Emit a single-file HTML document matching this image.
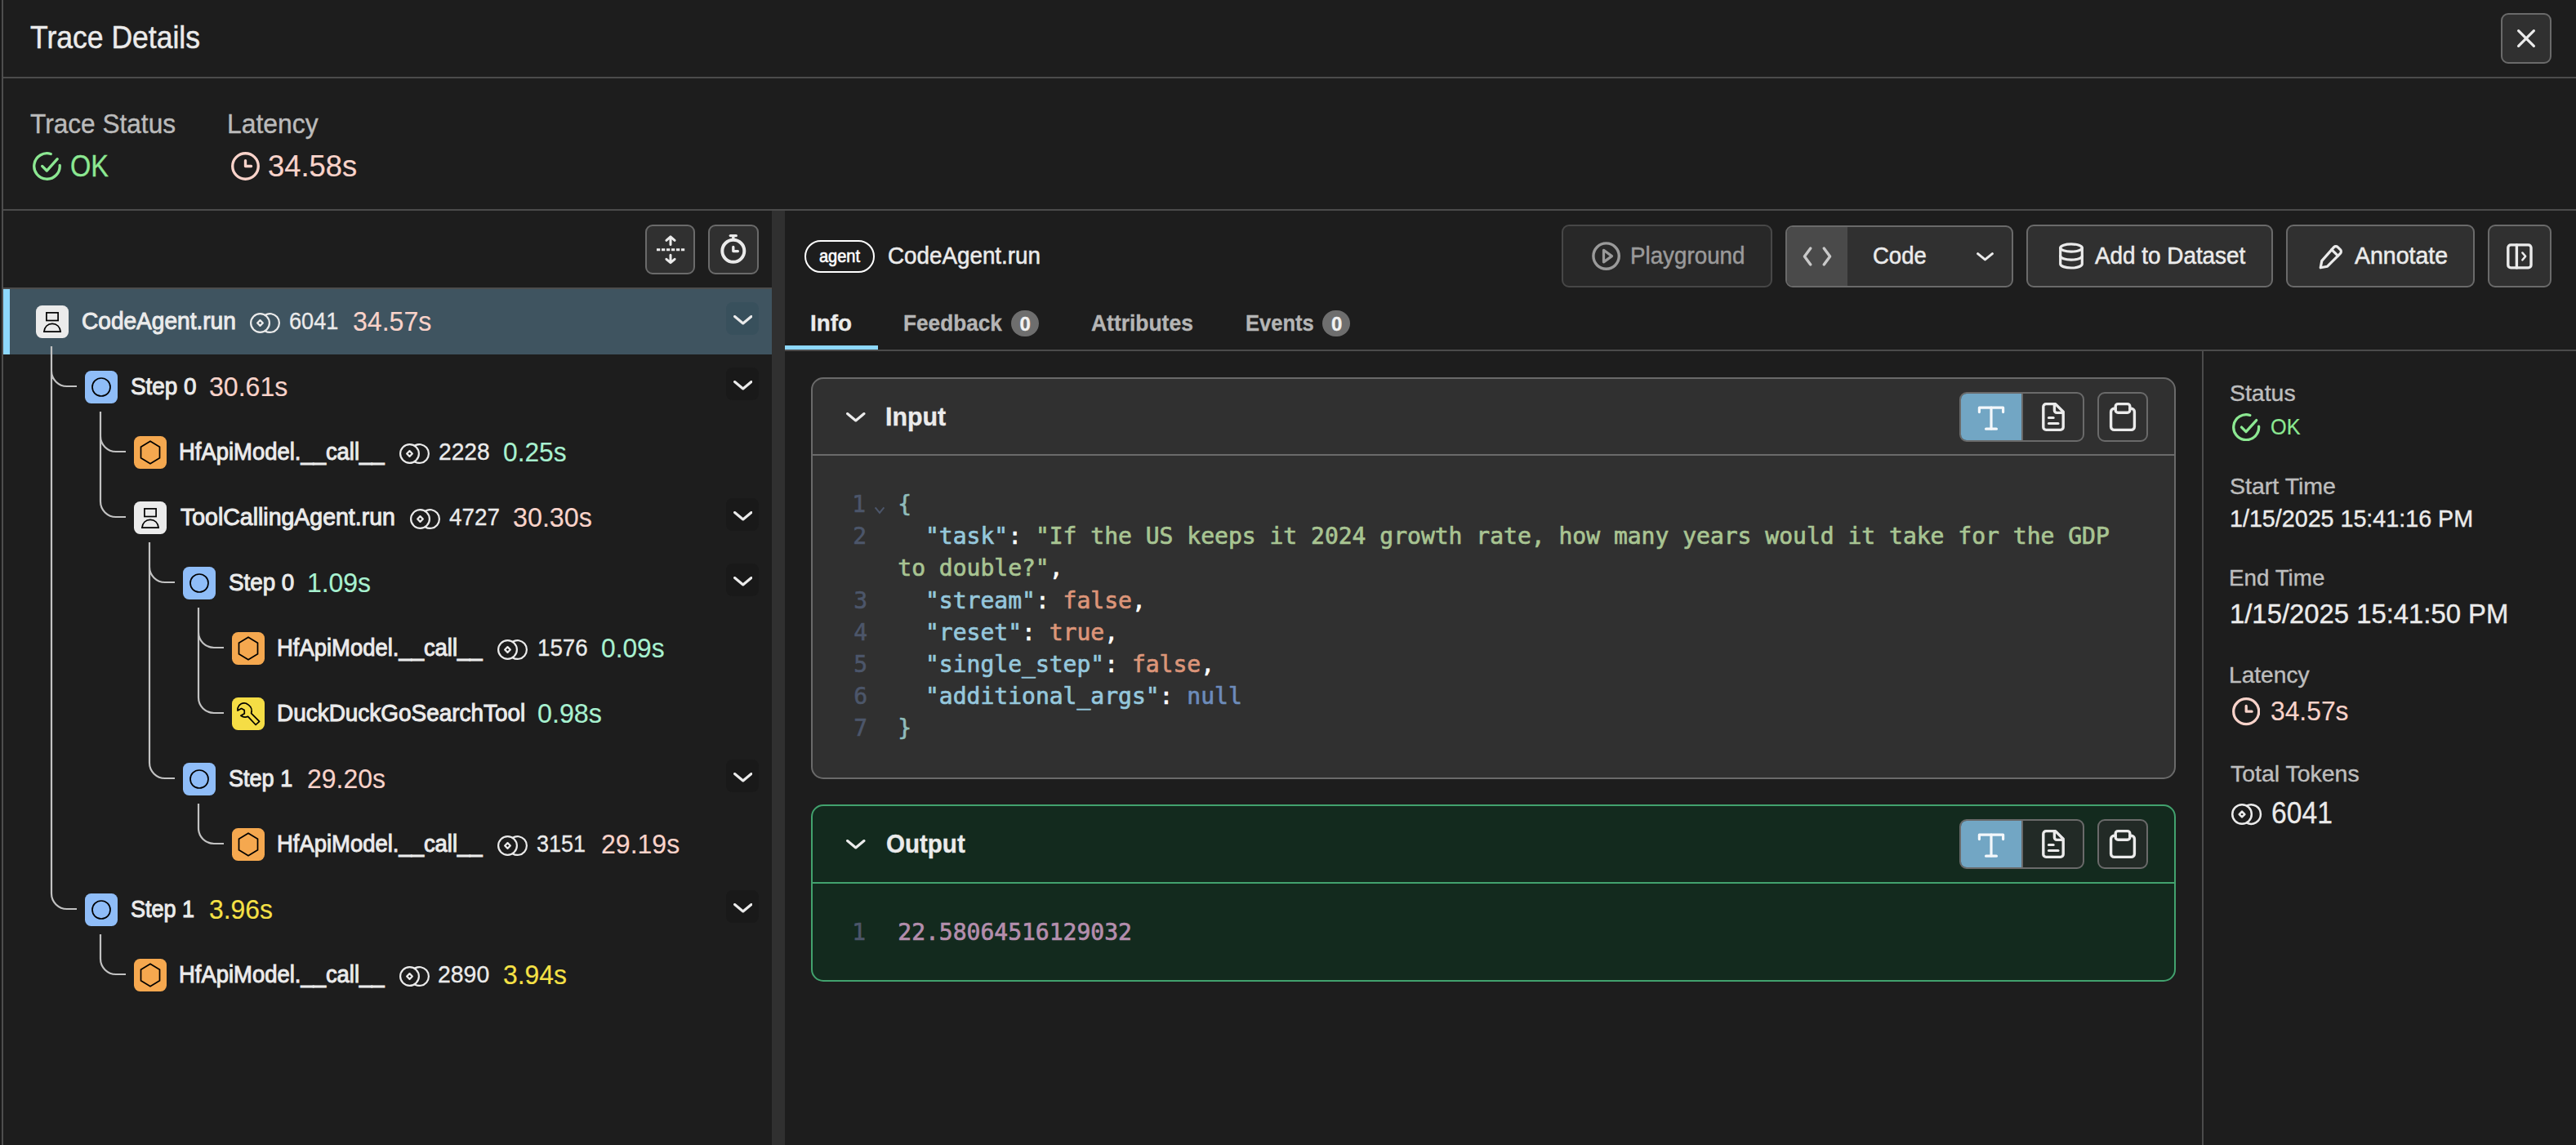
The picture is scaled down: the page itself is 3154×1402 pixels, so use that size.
<!DOCTYPE html>
<html lang="en"><head><meta charset="utf-8"><title>Trace Details</title>
<style>
html,body{margin:0;padding:0}
body{width:3154px;height:1402px;overflow:hidden;position:relative;background:#1d1d1d;font-family:"Liberation Sans", sans-serif;color:#ebebeb}
.t{position:absolute;white-space:pre;margin:0;transform-origin:0 0}
.btn{position:absolute;box-sizing:border-box;border:2px solid #6a6a6a;border-radius:9px;background:#303030}
.ib{position:absolute;width:40px;height:40px;border-radius:7.5px}
.m{font-family:"DejaVu Sans Mono", "Liberation Mono", monospace}
</style></head><body>

<div style="position:absolute;left:0px;top:0px;width:2px;height:1402px;background:#1a1a1a"></div>
<div style="position:absolute;left:2px;top:0px;width:2px;height:1402px;background:#4e4e4e"></div>
<div class="t" style="left:36.50px;top:24.40px;font-size:38.2px;line-height:43px;color:#ebebeb;transform:scaleX(0.9306);-webkit-text-stroke:0.5px #ebebeb;">Trace Details</div>
<div style="position:absolute;left:4px;top:94px;width:3150px;height:2px;background:#4b4b4b"></div>
<div class="btn" style="left:3062px;top:16px;width:62px;height:62px"></div>
<svg style="position:absolute;left:3080px;top:34px;" width="26" height="26" viewBox="0 0 26 26" fill="none"><path d="M3.6 3.6 L22.4 22.4 M22.4 3.6 L3.6 22.4" stroke="#ebebeb" stroke-width="3.2" stroke-linecap="round"/></svg>
<div class="t" style="left:36.50px;top:133.10px;font-size:33.1px;line-height:37px;color:#bbbbbb;transform:scaleX(0.9556);-webkit-text-stroke:0.4px #bbbbbb;">Trace Status</div>
<div class="t" style="left:278.07px;top:133.10px;font-size:33.1px;line-height:37px;color:#bbbbbb;transform:scaleX(0.9640);-webkit-text-stroke:0.4px #bbbbbb;">Latency</div>
<svg style="position:absolute;left:40px;top:186.2px;" width="35" height="35" viewBox="0 0 35 35" fill="none"><g transform="translate(17.50 17.50) scale(1.0086)" stroke="#8ce892" stroke-width="3.3" stroke-linecap="round" stroke-linejoin="round"><path d="M15.56 -1.09 A15.6 15.6 0 1 1 4.67 -14.89"/><path d="M-5.8 -0.1 L-0.2 5.5 L12.6 -8.7"/></g></svg>
<div class="t" style="left:85.73px;top:181.90px;font-size:37.4px;line-height:42px;color:#8ce892;transform:scaleX(0.8703);-webkit-text-stroke:0.3px #8ce892;">OK</div>
<svg style="position:absolute;left:282.5px;top:186.2px;" width="35" height="35" viewBox="0 0 35 35" fill="none"><g transform="translate(17.50 17.50) scale(1.0116)" stroke="#f9d3ca" stroke-width="3.3" stroke-linecap="round" stroke-linejoin="round"><circle cx="0" cy="0" r="15.6"/><path d="M0 -6.8 V0 H6.95"/></g></svg>
<div class="t" style="left:328.23px;top:181.90px;font-size:37.4px;line-height:42px;color:#f9d3ca;transform:scaleX(0.9713);-webkit-text-stroke:0.2px #f9d3ca;">34.58s</div>
<div style="position:absolute;left:4px;top:256px;width:3150px;height:2px;background:#4b4b4b"></div>
<div class="btn" style="left:790px;top:275px;width:61px;height:61px"></div>
<div class="btn" style="left:867px;top:275px;width:62px;height:61px"></div>
<svg style="position:absolute;left:800px;top:285px;" width="42" height="42" viewBox="0 0 42 42" fill="none"><g stroke="#ebebeb" stroke-width="3" stroke-linecap="round" stroke-linejoin="round"><path d="M21 14.4V5.4 M15.9 9.3 L21 4.9 L26.1 9.3"/><path d="M21 27.2V36.2 M15.9 32.3 L21 36.7 L26.1 32.3"/><path d="M4 20.7H38.2" stroke-dasharray="4.3 1.7" stroke-linecap="butt"/></g></svg>
<svg style="position:absolute;left:877px;top:283px;" width="42" height="46" viewBox="0 0 42 46" fill="none"><g stroke="#ebebeb" stroke-linecap="round" stroke-linejoin="round"><circle cx="20.8" cy="24.3" r="13.5" stroke-width="4"/><path d="M17.3 5.6H24.3" stroke-width="3.4"/><path d="M20.8 6V10" stroke-width="3.4"/><path d="M20.8 19.5V24.6H26.4" stroke-width="3.3"/></g></svg>
<div style="position:absolute;left:4px;top:352px;width:941px;height:2px;background:#4d4d4d"></div>
<div style="position:absolute;left:4px;top:354px;width:941px;height:80px;background:#3f5460"></div>
<div style="position:absolute;left:4px;top:354px;width:8px;height:80px;background:#8dd8fd"></div>
<div style="position:absolute;left:945px;top:258px;width:16px;height:1144px;background:#303030"></div>
<svg style="position:absolute;left:0px;top:0px;" width="945" height="1402" viewBox="0 0 945 1402" fill="none"><path d="M63 424 V1094 M63 448 V454 A19 19 0 0 0 82 473 H94 M63 1088 V1094 A19 19 0 0 0 82 1113 H94  M123 504 V614 M123 528 V534 A19 19 0 0 0 142 553 H154 M123 608 V614 A19 19 0 0 0 142 633 H154  M183 664 V934 M183 688 V694 A19 19 0 0 0 202 713 H214 M183 928 V934 A19 19 0 0 0 202 953 H214  M243 744 V854 M243 768 V774 A19 19 0 0 0 262 793 H274 M243 848 V854 A19 19 0 0 0 262 873 H274  M243 984 V1014 M243 1008 V1014 A19 19 0 0 0 262 1033 H274  M123 1144 V1174 M123 1168 V1174 A19 19 0 0 0 142 1193 H154 " stroke="#c2c2c2" stroke-width="2.2"/></svg>
<div class="ib" style="left:44px;top:374px;background:#ebebeb"></div><svg style="position:absolute;left:44px;top:374px;" width="40" height="40" viewBox="0 0 40 40" fill="none"><rect x="12.9" y="8.9" width="14.2" height="9.6" stroke="#000" stroke-width="1.7"/><path d="M9.9 32.1 C10.4 26.2 14.5 22.3 20 22.3 C25.5 22.3 29.6 26.2 30.1 32.1 Z" stroke="#000" stroke-width="1.7" stroke-linejoin="miter"/></svg>
<div class="t" style="left:99.78px;top:376.90px;font-size:29px;line-height:32px;color:#ebebeb;transform:scaleX(0.9678);-webkit-text-stroke:1.0px #ebebeb;">CodeAgent.run</div>
<svg style="position:absolute;left:304.5px;top:382.3px;" width="39.0" height="27.0" viewBox="0 0 39.0 27.0" fill="none"><circle cx="13.50" cy="13.50" r="11.4" stroke="#ebebeb" stroke-width="2.2"/><path d="M19.50 3.81 A11.4 11.4 0 1 1 19.50 23.19" stroke="#ebebeb" stroke-width="2.2"/><path d="M13.50 10.15 L16.85 13.50 L13.50 16.85 L10.15 13.50 Z" stroke="#ebebeb" stroke-width="2.2" stroke-linejoin="round"/></svg>
<div class="t" style="left:353.56px;top:376.90px;font-size:28.8px;line-height:32px;color:#ebebeb;transform:scaleX(0.9428);-webkit-text-stroke:0.3px #ebebeb;">6041</div>
<div class="t" style="left:432.27px;top:374.60px;font-size:32.8px;line-height:37px;color:#f9d3ca;transform:scaleX(0.9787);-webkit-text-stroke:0.15px #f9d3ca;">34.57s</div>
<div style="position:absolute;left:889px;top:370px;width:40px;height:40px;border-radius:8px;background:#38505c"></div>
<svg style="position:absolute;left:897.55px;top:386.45px;" width="23.5" height="11.5" viewBox="0 0 23.5 11.5" fill="none"><path d="M1.6 1.6 L11.75 9.90 L21.90 1.6" stroke="#ebebeb" stroke-width="3.2" stroke-linecap="round" stroke-linejoin="round"/></svg>
<div class="ib" style="left:104px;top:454px;background:#8fbdf8"></div><svg style="position:absolute;left:104px;top:454px;" width="40" height="40" viewBox="0 0 40 40" fill="none"><circle cx="20" cy="20" r="11" stroke="#000" stroke-width="1.7"/></svg>
<div class="t" style="left:159.79px;top:456.90px;font-size:29px;line-height:32px;color:#ebebeb;transform:scaleX(0.9607);-webkit-text-stroke:1.0px #ebebeb;">Step 0</div>
<div class="t" style="left:255.77px;top:454.60px;font-size:32.8px;line-height:37px;color:#f9d3ca;transform:scaleX(0.9787);-webkit-text-stroke:0.15px #f9d3ca;">30.61s</div>
<div style="position:absolute;left:889px;top:450px;width:40px;height:40px;border-radius:8px;background:#191919"></div>
<svg style="position:absolute;left:897.55px;top:466.45px;" width="23.5" height="11.5" viewBox="0 0 23.5 11.5" fill="none"><path d="M1.6 1.6 L11.75 9.90 L21.90 1.6" stroke="#ebebeb" stroke-width="3.2" stroke-linecap="round" stroke-linejoin="round"/></svg>
<div class="ib" style="left:164px;top:534px;background:#f5a84f"></div><svg style="position:absolute;left:164px;top:534px;" width="40" height="40" viewBox="0 0 40 40" fill="none"><path d="M20 6.3 L31.5 13.2 V26.8 L20 33.7 L8.5 26.8 V13.2 Z" stroke="#000" stroke-width="1.7" stroke-linejoin="miter"/></svg>
<div class="t" style="left:218.86px;top:536.90px;font-size:29px;line-height:32px;color:#ebebeb;transform:scaleX(0.9458);-webkit-text-stroke:1.0px #ebebeb;">HfApiModel.__call__</div>
<svg style="position:absolute;left:487.75px;top:542.3px;" width="39.0" height="27.0" viewBox="0 0 39.0 27.0" fill="none"><circle cx="13.50" cy="13.50" r="11.4" stroke="#ebebeb" stroke-width="2.2"/><path d="M19.50 3.81 A11.4 11.4 0 1 1 19.50 23.19" stroke="#ebebeb" stroke-width="2.2"/><path d="M13.50 10.15 L16.85 13.50 L13.50 16.85 L10.15 13.50 Z" stroke="#ebebeb" stroke-width="2.2" stroke-linejoin="round"/></svg>
<div class="t" style="left:537.02px;top:536.90px;font-size:28.8px;line-height:32px;color:#ebebeb;transform:scaleX(0.9791);-webkit-text-stroke:0.3px #ebebeb;">2228</div>
<div class="t" style="left:616.03px;top:534.60px;font-size:32.8px;line-height:37px;color:#a8f1d0;transform:scaleX(0.9672);-webkit-text-stroke:0.15px #a8f1d0;">0.25s</div>
<div class="ib" style="left:164px;top:614px;background:#ebebeb"></div><svg style="position:absolute;left:164px;top:614px;" width="40" height="40" viewBox="0 0 40 40" fill="none"><rect x="12.9" y="8.9" width="14.2" height="9.6" stroke="#000" stroke-width="1.7"/><path d="M9.9 32.1 C10.4 26.2 14.5 22.3 20 22.3 C25.5 22.3 29.6 26.2 30.1 32.1 Z" stroke="#000" stroke-width="1.7" stroke-linejoin="miter"/></svg>
<div class="t" style="left:220.75px;top:616.90px;font-size:29px;line-height:32px;color:#ebebeb;transform:scaleX(0.9822);-webkit-text-stroke:1.0px #ebebeb;">ToolCallingAgent.run</div>
<svg style="position:absolute;left:500.75px;top:622.3px;" width="39.0" height="27.0" viewBox="0 0 39.0 27.0" fill="none"><circle cx="13.50" cy="13.50" r="11.4" stroke="#ebebeb" stroke-width="2.2"/><path d="M19.50 3.81 A11.4 11.4 0 1 1 19.50 23.19" stroke="#ebebeb" stroke-width="2.2"/><path d="M13.50 10.15 L16.85 13.50 L13.50 16.85 L10.15 13.50 Z" stroke="#ebebeb" stroke-width="2.2" stroke-linejoin="round"/></svg>
<div class="t" style="left:549.50px;top:616.90px;font-size:28.8px;line-height:32px;color:#ebebeb;transform:scaleX(0.9675);-webkit-text-stroke:0.3px #ebebeb;">4727</div>
<div class="t" style="left:627.77px;top:614.60px;font-size:32.8px;line-height:37px;color:#f9d3ca;transform:scaleX(0.9838);-webkit-text-stroke:0.15px #f9d3ca;">30.30s</div>
<div style="position:absolute;left:889px;top:610px;width:40px;height:40px;border-radius:8px;background:#191919"></div>
<svg style="position:absolute;left:897.55px;top:626.45px;" width="23.5" height="11.5" viewBox="0 0 23.5 11.5" fill="none"><path d="M1.6 1.6 L11.75 9.90 L21.90 1.6" stroke="#ebebeb" stroke-width="3.2" stroke-linecap="round" stroke-linejoin="round"/></svg>
<div class="ib" style="left:224px;top:694px;background:#8fbdf8"></div><svg style="position:absolute;left:224px;top:694px;" width="40" height="40" viewBox="0 0 40 40" fill="none"><circle cx="20" cy="20" r="11" stroke="#000" stroke-width="1.7"/></svg>
<div class="t" style="left:279.79px;top:696.90px;font-size:29px;line-height:32px;color:#ebebeb;transform:scaleX(0.9576);-webkit-text-stroke:1.0px #ebebeb;">Step 0</div>
<div class="t" style="left:376.05px;top:694.60px;font-size:32.8px;line-height:37px;color:#a8f1d0;transform:scaleX(0.9732);-webkit-text-stroke:0.15px #a8f1d0;">1.09s</div>
<div style="position:absolute;left:889px;top:690px;width:40px;height:40px;border-radius:8px;background:#191919"></div>
<svg style="position:absolute;left:897.55px;top:706.45px;" width="23.5" height="11.5" viewBox="0 0 23.5 11.5" fill="none"><path d="M1.6 1.6 L11.75 9.90 L21.90 1.6" stroke="#ebebeb" stroke-width="3.2" stroke-linecap="round" stroke-linejoin="round"/></svg>
<div class="ib" style="left:284px;top:774px;background:#f5a84f"></div><svg style="position:absolute;left:284px;top:774px;" width="40" height="40" viewBox="0 0 40 40" fill="none"><path d="M20 6.3 L31.5 13.2 V26.8 L20 33.7 L8.5 26.8 V13.2 Z" stroke="#000" stroke-width="1.7" stroke-linejoin="miter"/></svg>
<div class="t" style="left:338.86px;top:776.90px;font-size:29px;line-height:32px;color:#ebebeb;transform:scaleX(0.9458);-webkit-text-stroke:1.0px #ebebeb;">HfApiModel.__call__</div>
<svg style="position:absolute;left:607.75px;top:782.3px;" width="39.0" height="27.0" viewBox="0 0 39.0 27.0" fill="none"><circle cx="13.50" cy="13.50" r="11.4" stroke="#ebebeb" stroke-width="2.2"/><path d="M19.50 3.81 A11.4 11.4 0 1 1 19.50 23.19" stroke="#ebebeb" stroke-width="2.2"/><path d="M13.50 10.15 L16.85 13.50 L13.50 16.85 L10.15 13.50 Z" stroke="#ebebeb" stroke-width="2.2" stroke-linejoin="round"/></svg>
<div class="t" style="left:658.08px;top:776.90px;font-size:28.8px;line-height:32px;color:#ebebeb;transform:scaleX(0.9624);-webkit-text-stroke:0.3px #ebebeb;">1576</div>
<div class="t" style="left:736.03px;top:774.60px;font-size:32.8px;line-height:37px;color:#a8f1d0;transform:scaleX(0.9672);-webkit-text-stroke:0.15px #a8f1d0;">0.09s</div>
<div class="ib" style="left:284px;top:854px;background:#f5dd45"></div><svg style="position:absolute;left:284px;top:854px;" width="40" height="40" viewBox="0 0 40 40" fill="none"><path d="M17.3 7.2 C13.2 5.9 8.6 8.3 7.3 12.4 C6.9 13.6 6.8 14.9 7 16.1 L11.6 13.6 L15.2 15.6 L15.3 19.7 L10.9 22.3 C13.4 24.2 16.8 24.6 19.6 23.3 L29.1 33.5 L33.6 29.3 L23.6 19.4 C24.9 15.7 23.6 11.4 20.3 9.1 Z" stroke="#000" stroke-width="1.7" stroke-linejoin="round"/></svg>
<div class="t" style="left:338.82px;top:856.90px;font-size:29px;line-height:32px;color:#ebebeb;transform:scaleX(0.9633);-webkit-text-stroke:1.0px #ebebeb;">DuckDuckGoSearchTool</div>
<div class="t" style="left:657.77px;top:854.60px;font-size:32.8px;line-height:37px;color:#a8f1d0;transform:scaleX(0.9831);-webkit-text-stroke:0.15px #a8f1d0;">0.98s</div>
<div class="ib" style="left:224px;top:934px;background:#8fbdf8"></div><svg style="position:absolute;left:224px;top:934px;" width="40" height="40" viewBox="0 0 40 40" fill="none"><circle cx="20" cy="20" r="11" stroke="#000" stroke-width="1.7"/></svg>
<div class="t" style="left:279.82px;top:936.90px;font-size:29px;line-height:32px;color:#ebebeb;transform:scaleX(0.9331);-webkit-text-stroke:1.0px #ebebeb;">Step 1</div>
<div class="t" style="left:376.03px;top:934.60px;font-size:32.8px;line-height:37px;color:#f9d3ca;transform:scaleX(0.9735);-webkit-text-stroke:0.15px #f9d3ca;">29.20s</div>
<div style="position:absolute;left:889px;top:930px;width:40px;height:40px;border-radius:8px;background:#191919"></div>
<svg style="position:absolute;left:897.55px;top:946.45px;" width="23.5" height="11.5" viewBox="0 0 23.5 11.5" fill="none"><path d="M1.6 1.6 L11.75 9.90 L21.90 1.6" stroke="#ebebeb" stroke-width="3.2" stroke-linecap="round" stroke-linejoin="round"/></svg>
<div class="ib" style="left:284px;top:1014px;background:#f5a84f"></div><svg style="position:absolute;left:284px;top:1014px;" width="40" height="40" viewBox="0 0 40 40" fill="none"><path d="M20 6.3 L31.5 13.2 V26.8 L20 33.7 L8.5 26.8 V13.2 Z" stroke="#000" stroke-width="1.7" stroke-linejoin="miter"/></svg>
<div class="t" style="left:338.86px;top:1016.90px;font-size:29px;line-height:32px;color:#ebebeb;transform:scaleX(0.9458);-webkit-text-stroke:1.0px #ebebeb;">HfApiModel.__call__</div>
<svg style="position:absolute;left:608.0px;top:1022.3px;" width="39.0" height="27.0" viewBox="0 0 39.0 27.0" fill="none"><circle cx="13.50" cy="13.50" r="11.4" stroke="#ebebeb" stroke-width="2.2"/><path d="M19.50 3.81 A11.4 11.4 0 1 1 19.50 23.19" stroke="#ebebeb" stroke-width="2.2"/><path d="M13.50 10.15 L16.85 13.50 L13.50 16.85 L10.15 13.50 Z" stroke="#ebebeb" stroke-width="2.2" stroke-linejoin="round"/></svg>
<div class="t" style="left:657.06px;top:1016.90px;font-size:28.8px;line-height:32px;color:#ebebeb;transform:scaleX(0.9364);-webkit-text-stroke:0.3px #ebebeb;">3151</div>
<div class="t" style="left:735.82px;top:1014.60px;font-size:32.8px;line-height:37px;color:#f9d3ca;transform:scaleX(0.9766);-webkit-text-stroke:0.15px #f9d3ca;">29.19s</div>
<div class="ib" style="left:104px;top:1094px;background:#8fbdf8"></div><svg style="position:absolute;left:104px;top:1094px;" width="40" height="40" viewBox="0 0 40 40" fill="none"><circle cx="20" cy="20" r="11" stroke="#000" stroke-width="1.7"/></svg>
<div class="t" style="left:159.82px;top:1096.90px;font-size:29px;line-height:32px;color:#ebebeb;transform:scaleX(0.9307);-webkit-text-stroke:1.0px #ebebeb;">Step 1</div>
<div class="t" style="left:256.23px;top:1094.60px;font-size:32.8px;line-height:37px;color:#f5e146;transform:scaleX(0.9717);-webkit-text-stroke:0.15px #f5e146;">3.96s</div>
<div style="position:absolute;left:889px;top:1090px;width:40px;height:40px;border-radius:8px;background:#191919"></div>
<svg style="position:absolute;left:897.55px;top:1106.45px;" width="23.5" height="11.5" viewBox="0 0 23.5 11.5" fill="none"><path d="M1.6 1.6 L11.75 9.90 L21.90 1.6" stroke="#ebebeb" stroke-width="3.2" stroke-linecap="round" stroke-linejoin="round"/></svg>
<div class="ib" style="left:164px;top:1174px;background:#f5a84f"></div><svg style="position:absolute;left:164px;top:1174px;" width="40" height="40" viewBox="0 0 40 40" fill="none"><path d="M20 6.3 L31.5 13.2 V26.8 L20 33.7 L8.5 26.8 V13.2 Z" stroke="#000" stroke-width="1.7" stroke-linejoin="miter"/></svg>
<div class="t" style="left:218.86px;top:1176.90px;font-size:29px;line-height:32px;color:#ebebeb;transform:scaleX(0.9458);-webkit-text-stroke:1.0px #ebebeb;">HfApiModel.__call__</div>
<svg style="position:absolute;left:488.0px;top:1182.3px;" width="39.0" height="27.0" viewBox="0 0 39.0 27.0" fill="none"><circle cx="13.50" cy="13.50" r="11.4" stroke="#ebebeb" stroke-width="2.2"/><path d="M19.50 3.81 A11.4 11.4 0 1 1 19.50 23.19" stroke="#ebebeb" stroke-width="2.2"/><path d="M13.50 10.15 L16.85 13.50 L13.50 16.85 L10.15 13.50 Z" stroke="#ebebeb" stroke-width="2.2" stroke-linejoin="round"/></svg>
<div class="t" style="left:536.41px;top:1176.90px;font-size:28.8px;line-height:32px;color:#ebebeb;transform:scaleX(0.9864);-webkit-text-stroke:0.3px #ebebeb;">2890</div>
<div class="t" style="left:616.13px;top:1174.60px;font-size:32.8px;line-height:37px;color:#f5e146;transform:scaleX(0.9717);-webkit-text-stroke:0.15px #f5e146;">3.94s</div>
<div style="position:absolute;left:985px;top:294px;width:86px;height:40px;box-sizing:border-box;border:2.4px solid #ffffff;border-radius:20px"></div>
<div class="t" style="left:1003.00px;top:301.10px;font-size:21.8px;line-height:25px;color:#ffffff;transform:scaleX(0.9176);-webkit-text-stroke:0.6px #ffffff;">agent</div>
<div class="t" style="left:1086.54px;top:296.80px;font-size:28.9px;line-height:32px;color:#ebebeb;transform:scaleX(0.9621);-webkit-text-stroke:0.55px #ebebeb;">CodeAgent.run</div>
<div class="btn" style="left:1912px;top:275px;width:258px;height:77px;background:#282828;border-color:#474747"></div>
<svg style="position:absolute;left:1949px;top:296px;" width="35" height="35" viewBox="0 0 35 35" fill="none"><circle cx="17.6" cy="17.6" r="15.7" stroke="#9a9a9a" stroke-width="3.4"/><path d="M14.5 10.3 L24.5 17.6 L14.5 24.9 Z" stroke="#9a9a9a" stroke-width="3.2" stroke-linejoin="round"/></svg>
<div class="t" style="left:1995.58px;top:296.80px;font-size:28.9px;line-height:32px;color:#9a9a9a;transform:scaleX(0.9609);-webkit-text-stroke:0.5px #9a9a9a;">Playground</div>
<div class="btn" style="left:2186px;top:276px;width:279px;height:76px;overflow:hidden"><div style="position:absolute;left:0;top:0;width:74px;height:72px;background:#4a4a4a"></div></div>
<svg style="position:absolute;left:2205px;top:300px;" width="40" height="28" viewBox="0 0 40 28" fill="none"><path d="M11.8 4 L4.4 14 L11.8 24 M28.2 4 L35.6 14 L28.2 24" stroke="#c9c9c9" stroke-width="3.4" stroke-linecap="round" stroke-linejoin="round"/></svg>
<div class="t" style="left:2293.30px;top:296.80px;font-size:28.9px;line-height:32px;color:#ebebeb;transform:scaleX(0.9515);-webkit-text-stroke:0.55px #ebebeb;">Code</div>
<svg style="position:absolute;left:2420.0px;top:309.25px;" width="21" height="10.5" viewBox="0 0 21 10.5" fill="none"><path d="M1.6 1.6 L10.50 8.90 L19.40 1.6" stroke="#ebebeb" stroke-width="3" stroke-linecap="round" stroke-linejoin="round"/></svg>
<div class="btn" style="left:2481px;top:275px;width:302px;height:77px"></div>
<svg style="position:absolute;left:2519px;top:296px;" width="34" height="36" viewBox="0 0 34 36" fill="none"><g stroke="#ebebeb" stroke-width="3.2" stroke-linecap="round"><ellipse cx="17" cy="7.5" rx="13.3" ry="4.7"/><path d="M3.7 7.5V27.3 C3.7 29.9 9.7 32 17 32 C24.3 32 30.3 29.9 30.3 27.3 V7.5"/><path d="M3.7 17.4 C3.7 20 9.7 22.1 17 22.1 C24.3 22.1 30.3 20 30.3 17.4"/></g></svg>
<div class="t" style="left:2564.50px;top:296.80px;font-size:28.9px;line-height:32px;color:#ebebeb;transform:scaleX(0.9642);-webkit-text-stroke:0.55px #ebebeb;">Add to Dataset</div>
<div class="btn" style="left:2799px;top:275px;width:231px;height:77px"></div>
<svg style="position:absolute;left:2837px;top:298px;" width="33" height="32" viewBox="0 0 33 32" fill="none"><g stroke="#ebebeb" stroke-width="3.2" stroke-linecap="round" stroke-linejoin="round"><path d="M20.6 4.6 C21.9 3.3 24 3.3 25.3 4.6 L28.4 7.7 C29.7 9 29.7 11.1 28.4 12.4 L12.6 28.2 L4.2 29.8 L5.8 21.4 Z"/><path d="M17.8 7.6 L25.4 15.2"/></g></svg>
<div class="t" style="left:2883.25px;top:296.80px;font-size:28.9px;line-height:32px;color:#ebebeb;transform:scaleX(0.9861);-webkit-text-stroke:0.55px #ebebeb;">Annotate</div>
<div class="btn" style="left:3046px;top:275px;width:78px;height:77px"></div>
<svg style="position:absolute;left:3067px;top:297px;" width="36" height="34" viewBox="0 0 36 34" fill="none"><g stroke="#ebebeb" stroke-width="3.4" stroke-linejoin="round" stroke-linecap="round"><rect x="3.8" y="2.9" width="28.2" height="28" rx="3.4"/><path d="M14.4 2.9V30.9"/><path d="M21.3 12.4 L25.2 16.9 L21.3 21.4" stroke-width="2.4"/></g></svg>
<div class="t" style="left:991.99px;top:380.00px;font-size:27.6px;line-height:31px;color:#ebebeb;font-weight:bold;transform:scaleX(1.0059);-webkit-text-stroke:0.35px #ebebeb;">Info</div>
<div class="t" style="left:1106.05px;top:380.00px;font-size:27.6px;line-height:31px;color:#b5b5b5;font-weight:bold;transform:scaleX(0.9492);-webkit-text-stroke:0.35px #b5b5b5;">Feedback</div>
<div style="position:absolute;left:1238px;top:380px;width:34px;height:32px;border-radius:16px;background:#6e6e6e"></div>
<div class="t" style="left:1248.50px;top:382.50px;font-size:24px;line-height:27px;color:#f2f2f2;font-weight:bold;-webkit-text-stroke:0.35px #f2f2f2;">0</div>
<div class="t" style="left:1336.25px;top:380.00px;font-size:27.6px;line-height:31px;color:#b5b5b5;font-weight:bold;transform:scaleX(0.9580);-webkit-text-stroke:0.35px #b5b5b5;">Attributes</div>
<div class="t" style="left:1525.32px;top:380.00px;font-size:27.6px;line-height:31px;color:#b5b5b5;font-weight:bold;transform:scaleX(0.9255);-webkit-text-stroke:0.35px #b5b5b5;">Events</div>
<div style="position:absolute;left:1618.75px;top:380px;width:34.4px;height:32px;border-radius:16px;background:#6e6e6e"></div>
<div class="t" style="left:1630.00px;top:382.50px;font-size:24px;line-height:27px;color:#f2f2f2;font-weight:bold;-webkit-text-stroke:0.35px #f2f2f2;">0</div>
<div style="position:absolute;left:961px;top:428px;width:2193px;height:2px;background:#4b4b4b"></div>
<div style="position:absolute;left:961px;top:423px;width:114px;height:5px;background:#8dd8fd"></div>
<div style="position:absolute;left:2696px;top:430px;width:2px;height:972px;background:#4b4b4b"></div>
<div style="position:absolute;left:993px;top:462px;width:1671px;height:492px;box-sizing:border-box;border:2px solid #6a6a6a;border-radius:15px;background:#303030"></div>
<div style="position:absolute;left:995px;top:556px;width:1667px;height:2px;background:#6a6a6a"></div>
<svg style="position:absolute;left:1036.25px;top:505.25px;" width="23.5" height="11.5" viewBox="0 0 23.5 11.5" fill="none"><path d="M1.6 1.6 L11.75 9.90 L21.90 1.6" stroke="#ebebeb" stroke-width="3.2" stroke-linecap="round" stroke-linejoin="round"/></svg>
<div class="t" style="left:1083.83px;top:491.90px;font-size:31.6px;line-height:36px;color:#ebebeb;font-weight:bold;transform:scaleX(0.9614);-webkit-text-stroke:0.35px #ebebeb;">Input</div>
<div class="btn" style="left:2399px;top:480px;width:153px;height:61px;overflow:hidden;background:#303030"><div style="position:absolute;left:0;top:0;width:74px;height:57px;background:#72a6c4"></div><div style="position:absolute;left:74px;top:0;width:2px;height:57px;background:#6a6a6a"></div></div>
<svg style="position:absolute;left:2420px;top:494.6px;" width="36" height="34" viewBox="0 0 36 34" fill="none"><g stroke="#f4f8fb" stroke-width="3.2" stroke-linecap="round" stroke-linejoin="round"><path d="M3.4 9.6V4.2H32.6V9.6"/><path d="M18 4.2V30"/><path d="M11.6 30.2H24.4"/></g></svg>
<svg style="position:absolute;left:2498px;top:491px;" width="32" height="39" viewBox="0 0 32 39" fill="none"><g stroke="#ebebeb" stroke-width="3.4" stroke-linecap="round" stroke-linejoin="round"><path d="M7.2 3.6 H18.6 L28.2 13.2 V32 C28.2 33.9 26.7 35.4 24.8 35.4 H7.2 C5.3 35.4 3.8 33.9 3.8 32 V7 C3.8 5.1 5.3 3.6 7.2 3.6 Z"/><path d="M17.4 4.4 V11.6 C17.4 13.3 18.7 14.4 20.2 14.4 H27.4"/><path d="M10.4 20.6 H16.2" stroke-width="3"/><path d="M10.4 27.4 H22" stroke-width="3"/></g></svg>
<div class="btn" style="left:2568px;top:480px;width:62px;height:61px;background:#303030"></div>
<svg style="position:absolute;left:2581px;top:491px;" width="36" height="39" viewBox="0 0 36 39" fill="none"><g stroke="#ebebeb" stroke-width="3.4" stroke-linecap="round" stroke-linejoin="round"><path d="M9.2 9.2 H7.6 C5.4 9.2 3.6 11 3.6 13.2 V31.4 C3.6 33.6 5.4 35.4 7.6 35.4 H28.4 C30.6 35.4 32.4 33.6 32.4 31.4 V13.2 C32.4 11 30.6 9.2 28.4 9.2 H26.8"/><rect x="9.2" y="3.6" width="17.6" height="10.6" rx="3"/></g></svg>
<div style="position:absolute;left:993px;top:985px;width:1671px;height:217px;box-sizing:border-box;border:2px solid #42a26e;border-radius:15px;background:#132a1e"></div>
<div style="position:absolute;left:995px;top:1080px;width:1667px;height:2px;background:#42a26e"></div>
<svg style="position:absolute;left:1036.25px;top:1028.25px;" width="23.5" height="11.5" viewBox="0 0 23.5 11.5" fill="none"><path d="M1.6 1.6 L11.75 9.90 L21.90 1.6" stroke="#ebebeb" stroke-width="3.2" stroke-linecap="round" stroke-linejoin="round"/></svg>
<div class="t" style="left:1084.82px;top:1014.90px;font-size:31.6px;line-height:36px;color:#ebebeb;font-weight:bold;transform:scaleX(0.9345);-webkit-text-stroke:0.35px #ebebeb;">Output</div>
<div class="btn" style="left:2399px;top:1003px;width:153px;height:61px;overflow:hidden;background:#222a26"><div style="position:absolute;left:0;top:0;width:74px;height:57px;background:#72a6c4"></div><div style="position:absolute;left:74px;top:0;width:2px;height:57px;background:#6a6a6a"></div></div>
<svg style="position:absolute;left:2420px;top:1017.6px;" width="36" height="34" viewBox="0 0 36 34" fill="none"><g stroke="#f4f8fb" stroke-width="3.2" stroke-linecap="round" stroke-linejoin="round"><path d="M3.4 9.6V4.2H32.6V9.6"/><path d="M18 4.2V30"/><path d="M11.6 30.2H24.4"/></g></svg>
<svg style="position:absolute;left:2498px;top:1014px;" width="32" height="39" viewBox="0 0 32 39" fill="none"><g stroke="#ebebeb" stroke-width="3.4" stroke-linecap="round" stroke-linejoin="round"><path d="M7.2 3.6 H18.6 L28.2 13.2 V32 C28.2 33.9 26.7 35.4 24.8 35.4 H7.2 C5.3 35.4 3.8 33.9 3.8 32 V7 C3.8 5.1 5.3 3.6 7.2 3.6 Z"/><path d="M17.4 4.4 V11.6 C17.4 13.3 18.7 14.4 20.2 14.4 H27.4"/><path d="M10.4 20.6 H16.2" stroke-width="3"/><path d="M10.4 27.4 H22" stroke-width="3"/></g></svg>
<div class="btn" style="left:2568px;top:1003px;width:62px;height:61px;background:#222a26"></div>
<svg style="position:absolute;left:2581px;top:1014px;" width="36" height="39" viewBox="0 0 36 39" fill="none"><g stroke="#ebebeb" stroke-width="3.4" stroke-linecap="round" stroke-linejoin="round"><path d="M9.2 9.2 H7.6 C5.4 9.2 3.6 11 3.6 13.2 V31.4 C3.6 33.6 5.4 35.4 7.6 35.4 H28.4 C30.6 35.4 32.4 33.6 32.4 31.4 V13.2 C32.4 11 30.6 9.2 28.4 9.2 H26.8"/><rect x="9.2" y="3.6" width="17.6" height="10.6" rx="3"/></g></svg>
<div class="t m" style="left:1043.30px;top:601.00px;font-size:28px;line-height:33px;color:#4c566a;-webkit-text-stroke:0.6px #4c566a;">1</div>
<div class="t m" style="left:1099.3px;top:601.00px;font-size:28px;line-height:33px;-webkit-text-stroke:0.7px currentColor"><span style="color:#8fbcbb">{</span></div>
<svg style="position:absolute;left:1070px;top:619px;" width="14" height="12" viewBox="0 0 14 12" fill="none"><path d="M1.6 2.4 L7 9 L12.4 2.4" stroke="#4c566a" stroke-width="2"/></svg>
<div class="t m" style="left:1044.30px;top:640.20px;font-size:28px;line-height:33px;color:#4c566a;-webkit-text-stroke:0.6px #4c566a;">2</div>
<div class="t m" style="left:1099.3px;top:640.20px;font-size:28px;line-height:33px;-webkit-text-stroke:0.7px currentColor"><span style="color:#ffffff">  </span><span style="color:#95c7dc">"task"</span><span style="color:#ffffff">: </span><span style="color:#a8c492">"If the US keeps it 2024 growth rate, how many years would it take for the GDP</span></div>
<div class="t m" style="left:1099.3px;top:679.40px;font-size:28px;line-height:33px;-webkit-text-stroke:0.7px currentColor"><span style="color:#a8c492">to double?"</span><span style="color:#ffffff">,</span></div>
<div class="t m" style="left:1045.30px;top:718.60px;font-size:28px;line-height:33px;color:#4c566a;-webkit-text-stroke:0.6px #4c566a;">3</div>
<div class="t m" style="left:1099.3px;top:718.60px;font-size:28px;line-height:33px;-webkit-text-stroke:0.7px currentColor"><span style="color:#ffffff">  </span><span style="color:#95c7dc">"stream"</span><span style="color:#ffffff">: </span><span style="color:#dc9579">false</span><span style="color:#ffffff">,</span></div>
<div class="t m" style="left:1045.30px;top:757.80px;font-size:28px;line-height:33px;color:#4c566a;-webkit-text-stroke:0.6px #4c566a;">4</div>
<div class="t m" style="left:1099.3px;top:757.80px;font-size:28px;line-height:33px;-webkit-text-stroke:0.7px currentColor"><span style="color:#ffffff">  </span><span style="color:#95c7dc">"reset"</span><span style="color:#ffffff">: </span><span style="color:#dc9579">true</span><span style="color:#ffffff">,</span></div>
<div class="t m" style="left:1045.30px;top:797.00px;font-size:28px;line-height:33px;color:#4c566a;-webkit-text-stroke:0.6px #4c566a;">5</div>
<div class="t m" style="left:1099.3px;top:797.00px;font-size:28px;line-height:33px;-webkit-text-stroke:0.7px currentColor"><span style="color:#ffffff">  </span><span style="color:#95c7dc">"single_step"</span><span style="color:#ffffff">: </span><span style="color:#dc9579">false</span><span style="color:#ffffff">,</span></div>
<div class="t m" style="left:1045.30px;top:836.20px;font-size:28px;line-height:33px;color:#4c566a;-webkit-text-stroke:0.6px #4c566a;">6</div>
<div class="t m" style="left:1099.3px;top:836.20px;font-size:28px;line-height:33px;-webkit-text-stroke:0.7px currentColor"><span style="color:#ffffff">  </span><span style="color:#95c7dc">"additional_args"</span><span style="color:#ffffff">: </span><span style="color:#6d8cba">null</span></div>
<div class="t m" style="left:1045.30px;top:875.40px;font-size:28px;line-height:33px;color:#4c566a;-webkit-text-stroke:0.6px #4c566a;">7</div>
<div class="t m" style="left:1099.3px;top:875.40px;font-size:28px;line-height:33px;-webkit-text-stroke:0.7px currentColor"><span style="color:#8fbcbb">}</span></div>
<div class="t m" style="left:1043.30px;top:1125.40px;font-size:28px;line-height:33px;color:#4c566a;-webkit-text-stroke:0.6px #4c566a;">1</div>
<div class="t m" style="left:1099.3px;top:1125.40px;font-size:28px;line-height:33px;-webkit-text-stroke:0.7px currentColor"><span style="color:#b48ead">22.58064516129032</span></div>
<div class="t" style="left:2729.58px;top:465.60px;font-size:28.0px;line-height:31px;color:#bdbdbd;transform:scaleX(1.0158);-webkit-text-stroke:0.4px #bdbdbd;">Status</div>
<svg style="position:absolute;left:2733.2px;top:505.6px;" width="34.4" height="34.4" viewBox="0 0 34.4 34.4" fill="none"><g transform="translate(17.20 17.20) scale(0.9914)" stroke="#8ce892" stroke-width="3.3" stroke-linecap="round" stroke-linejoin="round"><path d="M15.56 -1.09 A15.6 15.6 0 1 1 4.67 -14.89"/><path d="M-5.8 -0.1 L-0.2 5.5 L12.6 -8.7"/></g></svg>
<div class="t" style="left:2780.01px;top:505.90px;font-size:28.5px;line-height:32px;color:#8ce892;transform:scaleX(0.8863);-webkit-text-stroke:0.2px #8ce892;">OK</div>
<div class="t" style="left:2729.58px;top:580.00px;font-size:28.0px;line-height:31px;color:#bdbdbd;transform:scaleX(1.0188);-webkit-text-stroke:0.4px #bdbdbd;">Start Time</div>
<div class="t" style="left:2729.92px;top:619.00px;font-size:28.9px;line-height:32px;color:#ebebeb;transform:scaleX(0.9922);-webkit-text-stroke:0.4px #ebebeb;">1/15/2025 15:41:16 PM</div>
<div class="t" style="left:2728.92px;top:691.80px;font-size:28.0px;line-height:31px;color:#bdbdbd;transform:scaleX(0.9922);-webkit-text-stroke:0.4px #bdbdbd;">End Time</div>
<div class="t" style="left:2729.79px;top:732.90px;font-size:32.7px;line-height:37px;color:#ebebeb;transform:scaleX(1.0041);-webkit-text-stroke:0.4px #ebebeb;">1/15/2025 15:41:50 PM</div>
<div class="t" style="left:2728.89px;top:811.20px;font-size:28.0px;line-height:31px;color:#bdbdbd;transform:scaleX(1.0045);-webkit-text-stroke:0.4px #bdbdbd;">Latency</div>
<svg style="position:absolute;left:2733px;top:854.3px;" width="34.4" height="34.4" viewBox="0 0 34.4 34.4" fill="none"><g transform="translate(17.20 17.20) scale(0.9942)" stroke="#f9d3ca" stroke-width="3.3" stroke-linecap="round" stroke-linejoin="round"><circle cx="0" cy="0" r="15.6"/><path d="M0 -6.8 V0 H6.95"/></g></svg>
<div class="t" style="left:2780.22px;top:853.40px;font-size:32.4px;line-height:36px;color:#f9d3ca;transform:scaleX(0.9817);-webkit-text-stroke:0.15px #f9d3ca;">34.57s</div>
<div class="t" style="left:2730.90px;top:931.60px;font-size:28.0px;line-height:31px;color:#bdbdbd;transform:scaleX(1.0159);-webkit-text-stroke:0.4px #bdbdbd;">Total Tokens</div>
<svg style="position:absolute;left:2730.65px;top:982.65px;" width="39.2" height="28.1" viewBox="0 0 39.2 28.1" fill="none"><circle cx="14.05" cy="14.05" r="11.8" stroke="#ebebeb" stroke-width="2.5"/><path d="M19.60 3.64 A11.8 11.8 0 1 1 19.60 24.46" stroke="#ebebeb" stroke-width="2.5"/><path d="M14.05 10.70 L17.40 14.05 L14.05 17.40 L10.70 14.05 Z" stroke="#ebebeb" stroke-width="2.5" stroke-linejoin="round"/></svg>
<div class="t" style="left:2780.60px;top:973.90px;font-size:37.4px;line-height:42px;color:#ebebeb;transform:scaleX(0.9007);-webkit-text-stroke:0.3px #ebebeb;">6041</div>
</body></html>
